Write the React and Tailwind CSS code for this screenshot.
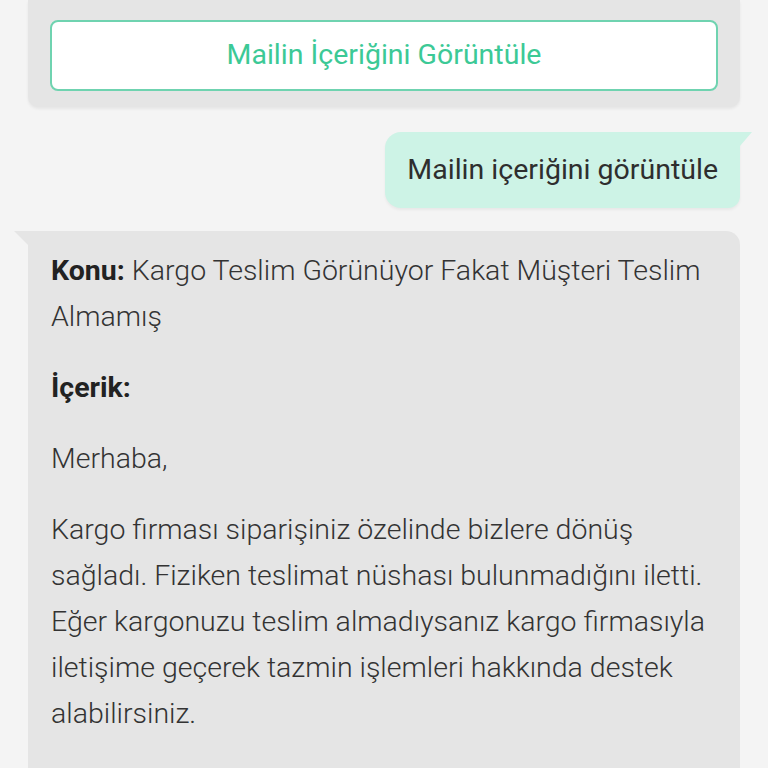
export default function App() {
  const font = { fontFamily: "Roboto, 'Noto Sans', sans-serif" };
  return (
    <div className="w-[768px] h-[768px] overflow-hidden bg-[#f4f4f4] text-[#333333]" style={font}>
      <div className="flex flex-col pl-[28px] pr-[28px]">
        {/* bot bubble with button (top clipped) */}
        <div className="bg-[#e5e5e5] rounded-b-[10px] pt-[20px] pb-[16px] px-[22px] shadow-[0_2px_3px_rgba(0,0,0,0.06)]">
          <button className="w-full h-[71px] bg-white border-2 border-[#6fd3b0] rounded-[8px] flex items-center justify-center text-[28.5px] text-[#3cc996]">
            Mailin İçeriğini Görüntüle
          </button>
        </div>

        {/* user bubble */}
        <div className="flex justify-end mt-[25px]">
          <div className="relative bg-[#cdf3e6] rounded-[16px] rounded-tr-none rounded-br-[12px] h-[76px] px-[22px] flex items-center text-[28.5px] text-[#2e2e2e] shadow-[0_2px_3px_rgba(0,0,0,0.05)]">
            Mailin içeriğini görüntüle
            <svg className="absolute top-0 right-[-12px]" width="12" height="14" viewBox="0 0 12 14">
              <path d="M0 0 H12 L0 14 Z" fill="#cdf3e6" />
            </svg>
          </div>
        </div>

        {/* bot bubble with email */}
        <div className="relative mt-[23px] bg-[#e5e5e5] rounded-[14px] rounded-tl-none pt-[17px] pb-[60px] px-[23px] text-[28.5px] leading-[46px] text-[#333333] font-light">
          <svg className="absolute top-0 left-[-14px]" width="14" height="14" viewBox="0 0 14 14">
            <path d="M0 0 H14 V14 Z" fill="#e5e5e5" />
          </svg>
          <p>
            <span className="font-bold text-[#222222]">Konu:</span> Kargo Teslim Görünüyor Fakat Müşteri Teslim Almamış
          </p>
          <p className="mt-[25px] font-bold text-[#222222]">İçerik:</p>
          <p className="mt-[25px]">Merhaba,</p>
          <p className="mt-[25px]">
            Kargo firması siparişiniz özelinde bizlere dönüş sağladı. Fiziken teslimat nüshası bulunmadığını iletti. Eğer kargonuzu teslim almadıysanız kargo firmasıyla iletişime geçerek tazmin işlemleri hakkında destek alabilirsiniz.
          </p>
        </div>
      </div>
    </div>
  );
}
